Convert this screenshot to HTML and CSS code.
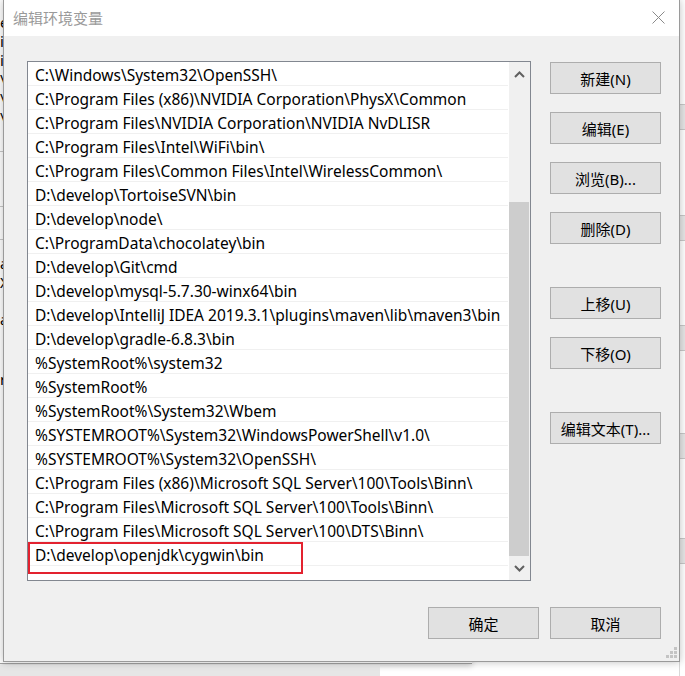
FILE: index.html
```html
<!DOCTYPE html>
<html lang="zh-CN">
<head>
  <meta charset="UTF-8" />
  <title>编辑环境变量</title>
  <link rel="stylesheet" href="styles.css">
</head>
<body>
  <div class="desktop">
    <div class="back-window back-left">
      <div class="peek">e</div>
      <div class="peek">i</div>
      <div class="peek">i</div>
      <div class="peek">\</div>
      <div class="peek">\</div>
      <div class="peek">\</div>
      <div class="rule r1"></div>
      <div class="rule r2"></div>
      <div class="rule r3"></div>
      <div class="peek lower">a</div>
      <div class="peek">X</div>
      <div class="peek gap">a</div>
      <div class="peek gap2">r</div>
    </div>
    <div class="back-window back-right">
      <div class="band b1"></div>
      <div class="band b2"></div>
      <div class="band b3"></div>
      <div class="band b4"></div>
      <div class="band b5"></div>
    </div>
    <div class="back-floor"></div>

    <div class="dialog">
      <div class="titlebar">
        <span class="title">编辑环境变量</span>
        <svg class="close" width="13" height="13" viewBox="0 0 13 13">
          <path d="M0.5 0.5 L12.5 12.5 M12.5 0.5 L0.5 12.5" stroke="#8a8a8a" stroke-width="1" fill="none"/>
        </svg>
      </div>

      <div class="content">
        <div class="main">
          <div class="listbox">
            <ul class="rows">
              <li>C:\Windows\System32\OpenSSH\</li>
              <li>C:\Program Files (x86)\NVIDIA Corporation\PhysX\Common</li>
              <li>C:\Program Files\NVIDIA Corporation\NVIDIA NvDLISR</li>
              <li>C:\Program Files\Intel\WiFi\bin\</li>
              <li>C:\Program Files\Common Files\Intel\WirelessCommon\</li>
              <li>D:\develop\TortoiseSVN\bin</li>
              <li>D:\develop\node\</li>
              <li>C:\ProgramData\chocolatey\bin</li>
              <li>D:\develop\Git\cmd</li>
              <li>D:\develop\mysql-5.7.30-winx64\bin</li>
              <li>D:\develop\IntelliJ IDEA 2019.3.1\plugins\maven\lib\maven3\bin</li>
              <li>D:\develop\gradle-6.8.3\bin</li>
              <li>%SystemRoot%\system32</li>
              <li>%SystemRoot%</li>
              <li>%SystemRoot%\System32\Wbem</li>
              <li>%SYSTEMROOT%\System32\WindowsPowerShell\v1.0\</li>
              <li>%SYSTEMROOT%\System32\OpenSSH\</li>
              <li>C:\Program Files (x86)\Microsoft SQL Server\100\Tools\Binn\</li>
              <li>C:\Program Files\Microsoft SQL Server\100\Tools\Binn\</li>
              <li>C:\Program Files\Microsoft SQL Server\100\DTS\Binn\</li>
              <li>D:\develop\openjdk\cygwin\bin</li>
            </ul>

            <div class="scrollbar">
              <div class="arrow">
                <svg width="11" height="7" viewBox="0 0 11 7">
                  <path d="M1 6 L5.5 1.5 L10 6" stroke="#606060" stroke-width="2" fill="none"/>
                </svg>
              </div>
              <div class="track">
                <div class="thumb"></div>
              </div>
              <div class="arrow">
                <svg width="11" height="7" viewBox="0 0 11 7">
                  <path d="M1 1 L5.5 5.5 L10 1" stroke="#606060" stroke-width="2" fill="none"/>
                </svg>
              </div>
            </div>

            <div class="marker"></div>
          </div>

          <div class="side-buttons">
            <button class="btn">新建(N)</button>
            <button class="btn">编辑(E)</button>
            <button class="btn">浏览(B)...</button>
            <button class="btn">删除(D)</button>
            <button class="btn group-start">上移(U)</button>
            <button class="btn">下移(O)</button>
            <button class="btn group-start">编辑文本(T)...</button>
          </div>
        </div>

        <div class="footer">
          <button class="btn">确定</button>
          <button class="btn">取消</button>
        </div>

        <svg class="grip" width="12" height="12" viewBox="0 0 12 12">
          <rect x="9" y="0" width="3" height="3" fill="#c4c4c4"/>
          <rect x="5" y="4" width="3" height="3" fill="#c4c4c4"/>
          <rect x="9" y="4" width="3" height="3" fill="#c4c4c4"/>
          <rect x="1" y="8" width="3" height="3" fill="#c4c4c4"/>
          <rect x="5" y="8" width="3" height="3" fill="#c4c4c4"/>
          <rect x="9" y="8" width="3" height="3" fill="#c4c4c4"/>
        </svg>
      </div>
    </div>
  </div>
</body>
</html>
```

FILE: styles.css
```css
* {
  box-sizing: border-box;
}

body {
  margin: 0;
  background: #ffffff;
  font-family: "Noto Sans", "Noto Sans CJK SC", sans-serif;
  overflow: hidden;
}

.desktop {
  position: relative;
  width: 685px;
  height: 676px;
}

/* windows behind the dialog */
.back-window {
  position: absolute;
  background: #ffffff;
}

.back-left {
  left: 0;
  top: 0;
  width: 472px;
  height: 664px;
  border-bottom: 1px solid #a0a0a0;
  box-shadow: 0 2px 6px rgba(0, 0, 0, 0.2);
  padding-top: 13px;
  font-size: 15px;
  line-height: 19px;
}

.peek {
  color: #000;
}

.peek.lower {
  margin-top: 14px;
}

.peek.gap {
  margin-top: 18px;
}

.peek.gap2 {
  margin-top: 41px;
}

.rule {
  height: 1px;
  background: #c8c8c8;
}

.r1 { margin-top: 24px; }
.r2 { margin-top: 54px; }
.r3 { margin-top: 32px; }

.back-right {
  left: 679px;
  top: 0;
  width: 6px;
  height: 676px;
  background: #ffffff;
  border-left: 1px solid #d8d8d8;
}

.band {
  position: absolute;
  left: 0;
  right: 0;
  background: #e6e6e6;
  border-top: 1px solid #c8c8c8;
  border-bottom: 1px solid #c8c8c8;
}

.b1 { top: 104px; height: 26px; }
.b2 { top: 215px; height: 26px; }
.b3 { top: 325px; height: 26px; }
.b4 { top: 433px; height: 26px; }
.b5 { top: 538px; height: 26px; }

.back-floor {
  position: absolute;
  left: 0;
  top: 665px;
  width: 380px;
  height: 11px;
  background: #e6e6e6;
}

/* the dialog */
.dialog {
  position: absolute;
  left: 3px;
  top: 0;
  width: 677px;
  height: 662px;
  background: #f0f0f0;
  border: 1px solid #9a9a9a;
  border-top: none;
  box-shadow: 0 0 8px rgba(0, 0, 0, 0.25);
  display: flex;
  flex-direction: column;
}

.titlebar {
  height: 36px;
  background: #ffffff;
  display: flex;
  align-items: center;
  justify-content: space-between;
  padding: 0 14px 0 9px;
}

.title {
  font-family: "Noto Sans CJK SC", sans-serif;
  font-size: 15px;
  color: #9a9a9a;
  margin-top: -1px;
}

.close {
  display: block;
  margin-top: -2px;
}

.content {
  position: relative;
  flex: 1;
  padding: 25px 18px 0 23px;
}

.main {
  display: flex;
  align-items: flex-start;
}

.listbox {
  position: relative;
  width: 504px;
  height: 520px;
  background: #ffffff;
  border: 1px solid #828790;
  display: flex;
  overflow: hidden;
}

.rows {
  list-style: none;
  margin: 0;
  padding: 0;
  width: 480px;
  font-size: 15.5px;
  color: #000;
}

.rows li {
  height: 24px;
  line-height: 23px;
  padding: 2px 0 0 7px;
  border-bottom: 1px solid #f0f0f0;
  white-space: nowrap;
}

.scrollbar {
  width: 21px;
  height: 100%;
  background: #f0f0f0;
  display: flex;
  flex-direction: column;
  margin-left: 1px;
  padding-right: 1px;
}

.arrow {
  height: 24px;
  display: flex;
  align-items: center;
  justify-content: center;
}

.track {
  flex: 1;
  position: relative;
}

.thumb {
  position: absolute;
  left: 0;
  right: 0;
  bottom: 0;
  height: 354px;
  background: #cdcdcd;
}

.marker {
  position: absolute;
  left: 0;
  top: 480px;
  width: 275px;
  height: 32px;
  border: 2px solid #e3222f;
}

.side-buttons {
  display: flex;
  flex-direction: column;
  gap: 18px;
  margin-left: 19px;
  margin-top: 1px;
}

.btn {
  width: 111px;
  height: 32px;
  background: #e1e1e1;
  border: 1px solid #adadad;
  font-family: "Noto Sans", "Noto Sans CJK SC", sans-serif;
  font-size: 15px;
  color: #000;
  padding: 0;
}

.group-start {
  margin-top: 25px;
}

.footer {
  display: flex;
  justify-content: flex-end;
  gap: 11px;
  margin-top: 26px;
}

.grip {
  position: absolute;
  right: 2px;
  bottom: 2px;
}
```
